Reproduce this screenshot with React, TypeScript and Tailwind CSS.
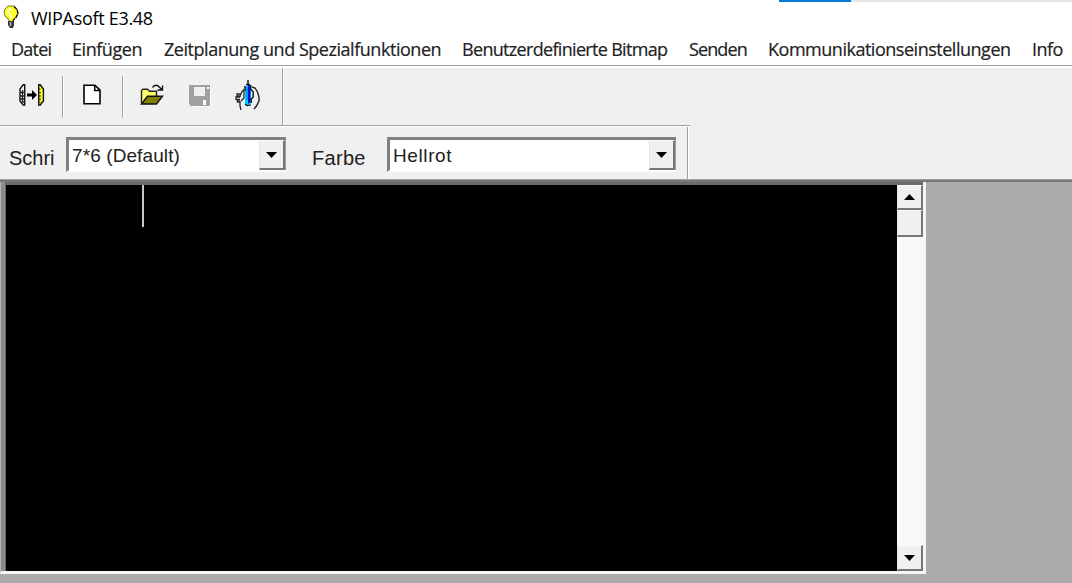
import type { ReactNode } from "react";

const menu = [
  { t: "Datei", c: "w-[61px] tracking-[-0.75px]" },
  { t: "Einfügen", c: "w-[92px] tracking-[-0.45px]" },
  { t: "Zeitplanung und Spezialfunktionen", c: "w-[298px] tracking-[-0.46px]" },
  { t: "Benutzerdefinierte Bitmap", c: "w-[227px] tracking-[-0.68px]" },
  { t: "Senden", c: "w-[79px] tracking-[-0.9px]" },
  { t: "Kommunikationseinstellungen", c: "w-[264px] tracking-[-0.48px]" },
  { t: "Info", c: "w-[40px] tracking-[-0.5px]" },
];

function Bulb() {
  return (
    <svg className="mt-[5px] ml-[3px] h-[24px] w-[17px] shrink-0" viewBox="0 0 17 24">
      <path d="M5 1h6l3 3 1 4-2 4-3 3v3H6v-3l-4-4-1-4 1-3z" fill="#ffff24" stroke="#77772c" strokeWidth="1" />
      <path d="M11 1.500l3 3 1 4-2 4-3 3" fill="none" stroke="#111" strokeWidth="1.300" strokeDasharray="4 .8" />
      <path d="M5 5v3M6 4l3 1M7 8l1 6" fill="none" stroke="#fff" strokeWidth="1.600" />
      <path d="M5 16h6v4l-1 3H7l-2-3z" fill="#333" />
      <path d="M7.500 17v4" stroke="#bbb" strokeWidth="1.500" />
    </svg>
  );
}

function Connect() {
  return (
    <svg className="h-[22px] w-[26px]" viewBox="0 0 26 22">
      <path d="M5.700 .8H4.200L1 5v12l3.200 4h1.500z" fill="#f4f4f4" stroke="#111" strokeWidth="1.400" />
      <path d="M3.500 6v11M1 8.500h5M1 12h5M1 15h5M2.500 18h3" stroke="#222" strokeWidth="1.300" />
      <path d="M8 9.500h5V6l5 5-5 5v-3.500H8z" fill="#000" />
      <path d="M19.700 .8h1.500L24.400 5v12l-3.200 4h-1.500z" fill="#ffff30" stroke="#111" strokeWidth="1.400" />
      <path d="M19.500 5h2M19.500 8.500h2.500M19.500 12h2.500M19.500 15h2.500M19.500 18h2" stroke="#222" strokeWidth="1.200" />
    </svg>
  );
}

function Page() {
  return (
    <svg className="h-[22px] w-[18px]" viewBox="0 0 18 22">
      <path d="M1 1.200h11l5 5v13.500H1z" fill="#fff" stroke="#000" strokeWidth="1.600" />
      <path d="M11.700 1.500v5H17" fill="none" stroke="#000" strokeWidth="1.500" />
    </svg>
  );
}

function Folder() {
  return (
    <svg className="h-[22px] w-[24px]" viewBox="0 0 24 22">
      <path d="M1.500 19.500V6.500L3 5.300h4.500L9.500 7.300h7V12" fill="#ffff65" stroke="#222" strokeWidth="1.400" />
      <path d="M1.500 20L7.500 12.300H22.500L16.500 20z" fill="#808000" stroke="#111" strokeWidth="1.400" />
      <path d="M12.500 3.500l2-2h3l4.500 4M22.500 1.500V6h-5" fill="none" stroke="#111" strokeWidth="1.400" />
    </svg>
  );
}

function Save() {
  return (
    <svg className="h-[23px] w-[23px]" viewBox="0 0 23 23">
      <path d="M2 2h20v20H4l-2-2z" fill="#fff" />
      <path d="M0 0h21v21H2l-2-2z" fill="#a0a0a0" />
      <path d="M5 2h11v9H5z" fill="#efefef" />
      <path d="M18 2h2v2h-2zM14 15h3v5h-3z" fill="#fff" />
    </svg>
  );
}

function Hands() {
  return (
    <svg className="h-[31px] w-[26px]" viewBox="0 0 26 31">
      <path d="M10 7l3-3 3 3v17l-3 2-3-2z" fill="#00d5ff" />
      <path d="M13 5h2.500v17L13 24z" fill="#0616d9" />
      <path d="M13 0v4M11 4.500h4M10 6v5M15.700 5v4l2.500 3v5l-2 2v4" fill="none" stroke="#111" strokeWidth="1.400" />
      <path d="M12 7v13" stroke="#0080ff" strokeWidth="1.500" />
      <path d="M9.500 9L7 11.500 5.500 15M9 11v7l-3 3M5.500 14H2v2h4M5 17H1v2.500h4M5 20H2.500v2H5M5 21v5l1 4" fill="none" stroke="#222" strokeWidth="1.300" />
      <path d="M17 7l3 1 2.500 4 1.500 5v4l-2.500 5-2.500 3" fill="none" stroke="#222" strokeWidth="1.400" />
      <path d="M10 24l2 1.500 4-.5" fill="none" stroke="#111" strokeWidth="1.200" />
    </svg>
  );
}

function Divider() {
  return <div className="mt-[8px] h-[42px] w-[2px] border-l border-r border-l-[#a0a0a0] border-r-white" />;
}

function Tri({ up = false }: { up?: boolean }) {
  return (
    <svg className="h-[6px] w-[11px]" viewBox="0 0 11 6">
      <path d={up ? "M0 6L5.500 0L11 6z" : "M0 0L5.500 6L11 0z"} fill="#000" />
    </svg>
  );
}

function Raised({ children, className }: { children?: ReactNode; className: string }) {
  return (
    <div className={"flex shrink-0 items-center justify-center border-t border-r-2 border-b-2 border-l border-t-[#fafafa] border-r-[#777] border-b-[#777] border-l-[#e4e4e4] bg-[#f0f0f0] " + className}>
      {children}
    </div>
  );
}

function Select({ text, className, textClass }: { text: string; className: string; textClass: string }) {
  return (
    <div className={"mt-[10px] flex h-[35px] shrink-0 border-t-[3px] border-b-2 border-l-[3px] border-t-[#808080] border-b-white border-l-[#808080] bg-white text-[19px] leading-[31px] " + className}>
      <span className={"min-w-0 flex-1 pl-[3px] whitespace-nowrap " + textClass}>{text}</span>
      <Raised className="h-[30px] w-[26px]"><Tri /></Raised>
      <div className="h-[30px] w-px bg-[#a0a0a0]" />
    </div>
  );
}

export default function App() {
  return (
    <div className="flex h-[583px] w-[1072px] flex-col overflow-hidden bg-[#ababab] font-['Liberation_Sans',sans-serif] text-[#222]">
      <div className="flex h-[34px] shrink-0 bg-white">
        <Bulb />
        <span className="ml-[11px] w-[748px] pt-[6px] font-['Open_Sans',sans-serif] text-[18px] leading-[24px] tracking-[-0.3px] text-black">WIPAsoft E3.48</span>
        <div className="h-[2px] w-[72px] bg-[#0078d7]" />
        <div className="h-[2px] flex-1 bg-[#e5e5e5]" />
      </div>
      <div className="flex h-[31px] shrink-0 bg-white pl-[11px] font-['Open_Sans',sans-serif] text-[18px] leading-[30px] whitespace-nowrap [-webkit-text-stroke:0.2px_#222]">
        {menu.map((m) => (
          <div key={m.t} className={"shrink-0 " + m.c}>{m.t}</div>
        ))}
      </div>
      <div className="h-[3px] shrink-0 border-t border-b-2 border-t-[#a0a0a0] border-b-white" />
      <div className="flex h-[57px] shrink-0 bg-[#f0f0f0]">
        <div className="mt-[16px] ml-[19px] w-[43px]"><Connect /></div>
        <Divider />
        <div className="mt-[16px] w-[58px] pl-[19px]"><Page /></div>
        <Divider />
        <div className="mt-[16px] w-[65px] pl-[16px]"><Folder /></div>
        <div className="mt-[17px] w-[46px]"><Save /></div>
        <div className="mt-[12px] w-[47px]"><Hands /></div>
        <div className="h-[57px] w-[2px] border-l border-r border-l-[#a0a0a0] border-r-white" />
      </div>
      <div className="h-[54px] shrink-0 bg-[#f0f0f0]">
        <div className="flex h-[54px] w-[690px] flex-col">
          <div className="h-[2px] shrink-0 border-t border-b border-t-[#a0a0a0] border-b-white" />
          <div className="flex h-[52px] shrink-0">
            <span className="w-[66px] pt-[18px] pl-[9px] text-[20px] leading-[26px]">Schri</span>
            <Select text="7*6 (Default)" className="w-[220px]" textClass="tracking-[0.1px]" />
            <span className="w-[101px] pt-[18px] pl-[26px] text-[20px] leading-[26px] tracking-[0.3px]">Farbe</span>
            <Select text="Hellrot" className="w-[289px]" textClass="tracking-[0.6px]" />
            <div className="ml-[11px] h-[52px] w-[2px] border-l border-r border-l-[#a0a0a0] border-r-white" />
          </div>
        </div>
      </div>
      <div className="h-[3px] shrink-0 border-t border-b-2 border-t-[#a0a0a0] border-b-[#777]" />
      <div className="flex h-[392px] w-[926px] shrink-0 border-r-[3px] border-b-[3px] border-l border-r-[#f5f5f5] border-b-[#f5f5f5] border-l-[#b5b5b5] bg-[#6b6b6b]">
        <div className="h-[389px] w-[4px] bg-[#8a8a8a]" />
        <div className="mt-[3px] ml-[1px] h-[386px] w-[891px] bg-black">
          <div className="ml-[136px] h-[42px] w-[2px] bg-[#c8c8c8]" />
        </div>
        <div className="mt-[3px] flex h-[386px] w-[26px] flex-col bg-[#f8f8f8]">
          <Raised className="h-[25px] w-[26px]"><Tri up /></Raised>
          <Raised className="h-[27px] w-[26px]" />
          <div className="flex-1" />
          <Raised className="h-[26px] w-[26px]"><Tri /></Raised>
        </div>
      </div>
    </div>
  );
}
